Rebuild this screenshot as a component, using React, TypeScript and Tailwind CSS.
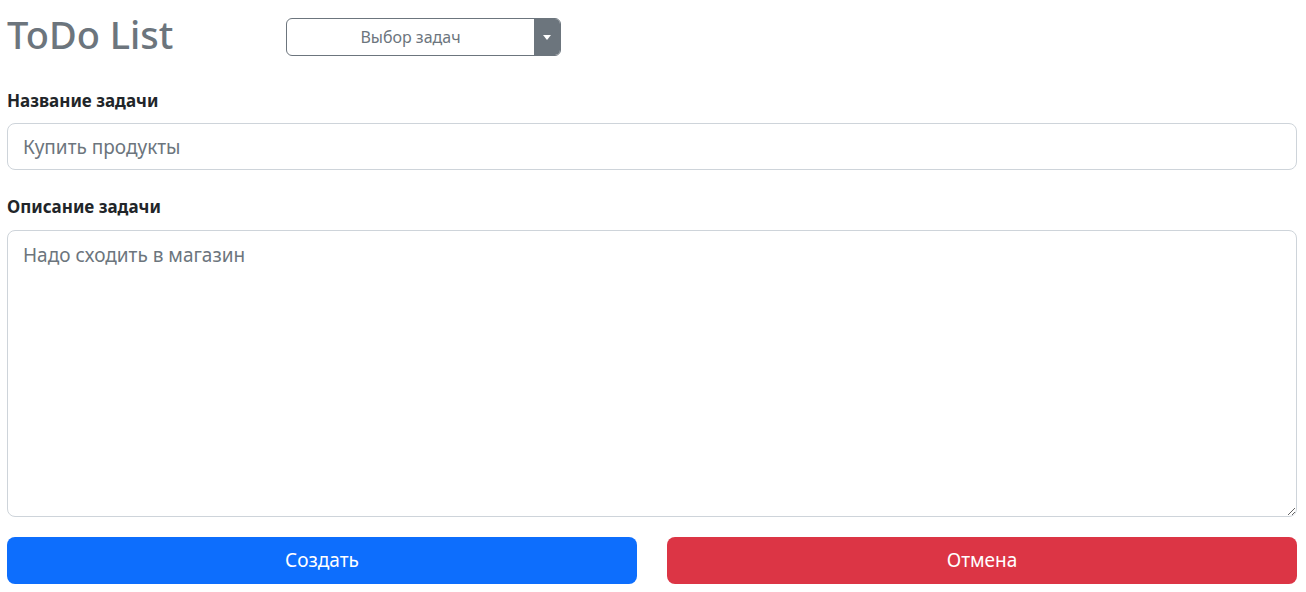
import React from "react";

export default function App() {
  const font = { fontFamily: '"Segoe UI", "Noto Sans", "Liberation Sans", sans-serif' };
  return (
    <div className="w-[1306px] h-[592px] bg-white text-[#212529]" style={font}>
      <div className="pl-[7px] pr-[9px] pt-[10px]">
        <div className="flex items-center">
          <h1 className="text-[38px] leading-[48px] font-medium text-[#6c757d] w-[279px]">ToDo List</h1>
          <div className="flex h-[38px] w-[275px] mt-[6px] rounded-[6px] border border-[#6c757d] overflow-hidden">
            <div className="flex-1 flex items-center justify-center text-[16px] text-[#6c757d]">Выбор задач</div>
            <div className="w-[26px] bg-[#6c757d] flex items-center justify-center">
              <div className="w-0 h-0 border-l-[4px] border-r-[4px] border-t-[5px] border-l-transparent border-r-transparent border-t-white" />
            </div>
          </div>
        </div>
        <div className="mt-[30px]">
          <label className="block text-[17px] leading-[25px] font-bold mb-[10px]">Название задачи</label>
          <input
            className="block w-full h-[47px] px-[15px] text-[19px] border border-[#ced4da] rounded-[8px] outline-none placeholder:text-[#6c757d]"
            placeholder="Купить продукты"
          />
        </div>
        <div className="mt-[24px]">
          <label className="block text-[17px] leading-[25px] font-bold mb-[11px]">Описание задачи</label>
          <textarea
            className="block w-full h-[287px] px-[15px] py-[9px] text-[19px] leading-[30px] border border-[#ced4da] rounded-[8px] outline-none placeholder:text-[#6c757d]"
            placeholder="Надо сходить в магазин"
          />
        </div>
        <div className="mt-[20px] flex gap-[30px]">
          <button className="flex-1 h-[47px] rounded-[8px] bg-[#0d6efd] text-white text-[19px]">Создать</button>
          <button className="flex-1 h-[47px] rounded-[8px] bg-[#dc3545] text-white text-[19px]">Отмена</button>
        </div>
      </div>
    </div>
  );
}
